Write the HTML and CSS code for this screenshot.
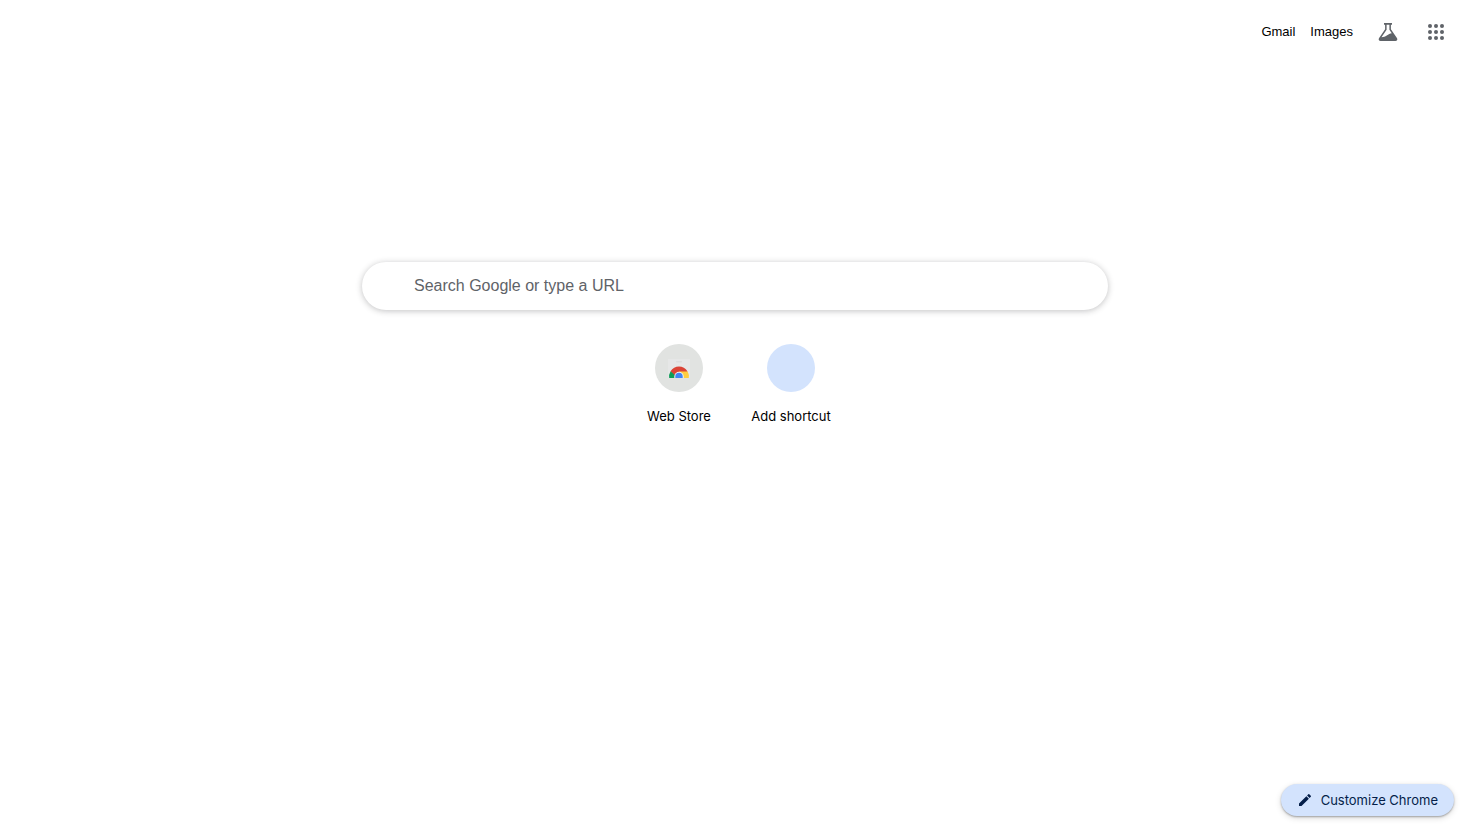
FILE: index.html
```html
<!DOCTYPE html>
<html lang="en">
<head>
<meta charset="utf-8">
<title>New Tab</title>
<link rel="stylesheet" href="styles.css">
</head>
<body>
<div class="page">
  <header class="topbar">
    <nav class="links">
      <a class="link" href="#">Gmail</a>
      <a class="link" href="#">Images</a>
    </nav>
    <button class="icon-button" type="button" aria-label="Search Labs">
      <svg width="24" height="24" viewBox="0 0 24 24" fill="#5f6368"><path fill-rule="evenodd" d="M8 3h8v1.800h-1.100v4.400l6 8.800c1 1.500.2 3-1.500 3H4.600c-1.700 0-2.500-1.500-1.500-3l6-8.800V4.800H8zM10.600 4.800v4.900L5.500 17.300c2.300 0 3.500-.4 5.300-1.700 1.700-1.200 3.200-1.900 5-2.300l-2.400-3.600V4.800z"/></svg>
    </button>
    <button class="icon-button" type="button" aria-label="Google apps">
      <svg width="24" height="24" viewBox="0 0 24 24" fill="#5f6368"><circle cx="6" cy="6" r="2"/><circle cx="12" cy="6" r="2"/><circle cx="18" cy="6" r="2"/><circle cx="6" cy="12" r="2"/><circle cx="12" cy="12" r="2"/><circle cx="18" cy="12" r="2"/><circle cx="6" cy="18" r="2"/><circle cx="12" cy="18" r="2"/><circle cx="18" cy="18" r="2"/></svg>
    </button>
  </header>
  <main class="content">
    <form class="search" role="search">
      <input class="search-input" type="text" aria-label="Search Google or type a URL" placeholder="Search Google or type a URL">
    </form>
    <div class="shortcuts">
      <a class="tile" href="#">
        <span class="tile-icon tile-icon-store">
          <svg width="24" height="24" viewBox="0 0 24 24"><path fill="#e6e7e7" d="M1 3h22v17.500q0 1.500-1.500 1.500h-19Q1 22 1 20.500z"/><rect x="9" y="5" width="6" height="1.500" rx=".7" fill="#dcdddd"/><path fill="#db4437" d="M3.600 15.200a9.800 9.800 0 0 1 16.800 0l-.4 1.300H12l-4.500 4z"/><path fill="#0f9d58" d="M3.600 15.200A10 10 0 0 0 2.200 22H9l-1.200-3z"/><path fill="#ffcd40" d="M12 15.600h8.600A9.800 9.800 0 0 1 21.800 22H15z"/><path fill="#f1f1f1" d="M7.300 22v-1.500a4.700 4.700 0 0 1 9.400 0V22z"/><path fill="#4285f4" d="M8.300 22v-1.500a3.700 3.700 0 0 1 7.400 0V22z"/></svg>
        </span>
        <span class="tile-label">Web Store</span>
      </a>
      <button class="tile" type="button">
        <span class="tile-icon tile-icon-add"></span>
        <span class="tile-label">Add shortcut</span>
      </button>
    </div>
  </main>
  <footer class="footer">
    <button class="customize" type="button">
      <svg width="16" height="16" viewBox="0 0 24 24" fill="#041e49"><path d="M3 17.250V21h3.750L17.810 9.940l-3.750-3.750zM20.710 7.040a1 1 0 0 0 0-1.410l-2.340-2.340a1 1 0 0 0-1.410 0l-1.830 1.830 3.750 3.750z"/></svg>
      <span>Customize Chrome</span>
    </button>
  </footer>
</div>
</body>
</html>
```
FILE: styles.css
```css
* {
  box-sizing: border-box;
}

body {
  margin: 0;
  background: #fff;
  color: #1f1f1f;
  font-family: Inter, sans-serif;
  font-size: 13px;
}

button {
  border: 0;
  background: none;
  font: inherit;
  cursor: pointer;
}

svg {
  display: block;
}

.page {
  display: flex;
  flex-direction: column;
  min-height: 100vh;
}

.topbar {
  display: flex;
  align-items: center;
  justify-content: flex-end;
  gap: 8px;
  padding: 12px 14px;
}

.links {
  display: flex;
  gap: 15px;
  margin-right: 7px;
  padding-bottom: 2px;
}

.link {
  color: #000;
  font-family: "Liberation Sans", Arial, sans-serif;
  text-decoration: none;
}

.icon-button {
  display: grid;
  place-items: center;
  width: 40px;
  height: 40px;
  padding: 0;
  border-radius: 50%;
}

.content {
  display: flex;
  flex: 1;
  flex-direction: column;
  align-items: center;
  gap: 18px;
  padding: 198px 24px 24px;
}

.search {
  width: 100%;
  max-width: 746px;
}

.search-input {
  display: block;
  width: 100%;
  height: 48px;
  padding: 0 52px;
  border: 0;
  border-radius: 24px;
  outline: none;
  background: #fff;
  box-shadow: 0 1px 6px rgba(32, 33, 36, 0.28);
  color: #1f1f1f;
  font-family: "Liberation Sans", Arial, sans-serif;
  font-size: 16px;
}

.search-input::placeholder {
  color: #5f6368;
  opacity: 1;
}

.shortcuts {
  display: flex;
}

.tile {
  display: flex;
  flex-direction: column;
  align-items: center;
  gap: 16px;
  width: 112px;
  padding: 16px 0;
  color: #1f1f1f;
  text-decoration: none;
}

.tile-icon {
  display: grid;
  place-items: center;
  width: 48px;
  height: 48px;
  border-radius: 50%;
}

.tile-icon-store {
  background: #e1e3e1;
}

.tile-icon-add {
  background: #d3e3fd;
}

.tile-label {
  color: #000;
  line-height: 16px;
}

.footer {
  display: flex;
  justify-content: flex-end;
  padding: 0 16px 16px;
}

.customize {
  display: flex;
  align-items: center;
  gap: 8px;
  height: 32px;
  padding: 0 16px;
  border-radius: 16px;
  background: #d3e3fd;
  box-shadow: 0 1px 2px rgba(0, 0, 0, 0.3), 0 2px 6px rgba(0, 0, 0, 0.15);
  color: #041e49;
}
```
